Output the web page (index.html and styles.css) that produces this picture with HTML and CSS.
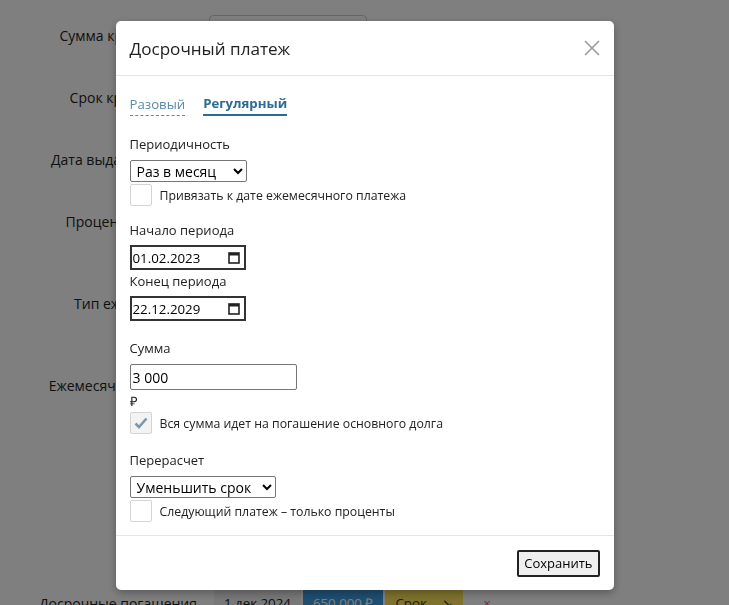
FILE: index.html
```html
<!DOCTYPE html>
<html lang="ru">

<head>
    <meta charset="UTF-8">
    <meta name="viewport" content="width=device-width, initial-scale=1.0">
    <title>Кредитный калькулятор</title>
    <link rel="stylesheet" href="styles.css">
</head>

<body>
    <div class="page">
        <div class="row">
            <span class="row-label">Сумма кредита, руб.</span>
            <input class="field" type="text" value="5 000 000">
        </div>
        <div class="row">
            <span class="row-label">Срок кредита, мес.</span>
            <input class="field" type="text" value="84">
        </div>
        <div class="row">
            <span class="row-label">Дата выдачи кредита</span>
            <input class="field" type="text" value="22.12.2022">
        </div>
        <div class="row">
            <span class="row-label">Процентная ставка</span>
            <input class="field" type="text" value="9,5">
        </div>
        <div class="row row-tall">
            <span class="row-label row-label-top">Тип ежемесячных платежей</span>
            <div class="field-note">Аннуитетный</div>
        </div>
        <div class="row">
            <span class="row-label">Ежемесячный платеж</span>
            <div class="field-note">81 718 ₽</div>
        </div>
        <div class="spacer"></div>
        <div class="row">
            <span class="row-label">Досрочные погашения</span>
            <div class="chips">
                <span class="chip chip-date">1 дек 2024</span>
                <span class="chip chip-sum">650 000 ₽</span>
                <span class="chip chip-type">Срок <span class="chip-arrow">↘</span></span>
                <span class="chip-remove">×</span>
            </div>
        </div>
    </div>

    <div class="backdrop">
        <div class="modal">
            <div class="modal-header">
                <h4 class="modal-title">Досрочный платеж</h4>
                <button class="close" type="button" aria-label="Закрыть">
                    <svg width="16" height="16" viewBox="0 0 16 16">
                        <path d="M1 1 L15 15 M15 1 L1 15" stroke="#9a9a9a" stroke-width="1.6" fill="none" />
                    </svg>
                </button>
            </div>

            <div class="modal-body">
                <div class="tabs">
                    <span class="tab">Разовый</span>
                    <span class="tab tab-active">Регулярный</span>
                </div>

                <div class="label">Периодичность</div>
                <select class="select select-period">
                    <option>Раз в месяц</option>
                    <option>Раз в квартал</option>
                    <option>Раз в год</option>
                </select>
                <label class="check">
                    <span class="check-box"></span>
                    <span>Привязать к дате ежемесячного платежа</span>
                </label>

                <div class="label label-date label-gap">Начало периода</div>
                <div class="date-field">
                    <span>01.02.2023</span>
                    <svg width="12" height="13" viewBox="0 0 12 13">
                        <rect x="1" y="2" width="10" height="10" fill="none" stroke="#222" stroke-width="1.6" />
                        <rect x="1" y="2" width="10" height="2.5" fill="#222" />
                    </svg>
                </div>
                <div class="label label-date label-tight">Конец периода</div>
                <div class="date-field">
                    <span>22.12.2029</span>
                    <svg width="12" height="13" viewBox="0 0 12 13">
                        <rect x="1" y="2" width="10" height="10" fill="none" stroke="#222" stroke-width="1.6" />
                        <rect x="1" y="2" width="10" height="2.5" fill="#222" />
                    </svg>
                </div>

                <div class="label label-wide">Сумма</div>
                <input class="input-sum" type="text" value="3 000">
                <div class="currency">₽</div>
                <label class="check">
                    <span class="check-box check-box-on">
                        <svg width="14" height="12" viewBox="0 0 14 12">
                            <path d="M1.5 6.5 L5 10 L12.5 1.5" stroke="#7d97ad" stroke-width="2.6" fill="none" />
                        </svg>
                    </span>
                    <span>Вся сумма идет на погашение основного долга</span>
                </label>

                <div class="label label-recalc">Перерасчет</div>
                <select class="select select-recalc">
                    <option>Уменьшить срок</option>
                    <option>Уменьшить платеж</option>
                </select>
                <label class="check">
                    <span class="check-box"></span>
                    <span>Следующий платеж – только проценты</span>
                </label>
            </div>

            <div class="modal-footer">
                <button class="btn-save" type="button">Сохранить</button>
            </div>
        </div>
    </div>
</body>

</html>
```

FILE: styles.css
```css
body {
    margin: 0;
    font-family: "Open Sans", Arial, sans-serif;
    font-size: 14px;
    color: #222;
    background: #fff;
    height: 605px;
    overflow: hidden;
}

/* страница под модальным окном */
.page {
    padding-top: 15px;
    display: flex;
    flex-direction: column;
    gap: 22px;
}

.row {
    display: grid;
    grid-template-columns: 160px 1fr;
    column-gap: 12px;
    align-items: center;
    height: 40px;
    padding-left: 37px;
}

.row-tall {
    height: 80px;
}

.row-label {
    text-align: right;
}

.row-label-top {
    align-self: start;
    margin-top: 31px;
}

.field {
    width: 158px;
    height: 34px;
    box-sizing: border-box;
    border: 1px solid #ccc;
    border-radius: 4px;
    font: inherit;
    padding: 0 8px;
    align-self: start;
}

.spacer {
    height: 134px;
}

.chips {
    display: flex;
    align-items: center;
    gap: 2px;
    align-self: start;
    padding-top: 7px;
    margin-left: 5px;
    font-size: 13.3px;
}

.chip {
    padding: 0 10px;
    line-height: 26px;
}

.chip-date {
    background: #f0f0f0;
}

.chip-sum {
    background: #3d9de0;
    color: #fff;
}

.chip-type {
    background: #ffe45a;
    color: #333;
}

.chip-arrow {
    margin-left: 12px;
}

.chip-remove {
    color: #ff5050;
    margin-left: 18px;
}

/* модальное окно */
.backdrop {
    position: fixed;
    inset: 0;
    background: rgba(0, 0, 0, 0.5);
    display: flex;
    justify-content: center;
    align-items: flex-start;
}

.modal {
    margin-top: 21px;
    width: 498px;
    background: #fff;
    border-radius: 5px;
    box-shadow: 0 3px 9px rgba(0, 0, 0, 0.3);
}

.modal-header {
    display: flex;
    justify-content: space-between;
    align-items: center;
    height: 54px;
    padding: 0 14px;
    border-bottom: 1px solid #e5e5e5;
}

.modal-title {
    margin: 0;
    font-size: 17.1px;
    font-weight: normal;
    color: #222;
}

.close {
    border: none;
    background: none;
    padding: 0;
    width: 16px;
    height: 16px;
    cursor: pointer;
}

.modal-body {
    padding: 17px 14px 13px;
    display: flex;
    flex-direction: column;
    align-items: flex-start;
}

.tabs {
    display: flex;
    gap: 18px;
    margin-bottom: 20px;
    font-size: 13.2px;
}

.tab {
    color: #5a8aa8;
    border-bottom: 1px dashed #5a8aa8;
    line-height: 22px;
}

.tab-active {
    font-weight: bold;
    color: #2d6c92;
    border-bottom: 2px solid #2d6c92;
    line-height: 21px;
}

.label {
    font-size: 13px;
    line-height: 17px;
    margin-bottom: 7px;
}

.label-date {
    margin-bottom: 6px;
}

.label-gap {
    margin-top: 16px;
}

.label-tight {
    margin-top: 3px;
}

.label-wide {
    margin-top: 19px;
}

.label-recalc {
    margin-top: 18px;
}

.select {
    font: inherit;
    font-size: 14px;
    height: 22px;
    padding: 0 2px;
    border: 1px solid #767676;
    border-radius: 2px;
    color: #000;
    background: #fff;
}

.select-period {
    width: 117px;
}

.select-recalc {
    width: 146px;
}

.check {
    display: flex;
    align-items: center;
    gap: 8px;
    font-size: 12.3px;
    margin-top: 2px;
}

.check-box {
    width: 20px;
    height: 20px;
    border: 1px solid #d4d4d4;
    border-radius: 2px;
    display: flex;
    align-items: center;
    justify-content: center;
}

.check-box-on {
    background: #f3f3f3;
}

.date-field {
    width: 116px;
    height: 25px;
    box-sizing: border-box;
    border: 2px solid #333;
    display: flex;
    align-items: center;
    justify-content: space-between;
    padding: 0 4px 0 1px;
    font-size: 13.3px;
    color: #000;
}

.input-sum {
    width: 167px;
    height: 26px;
    box-sizing: border-box;
    border: 1px solid #767676;
    border-radius: 2px;
    font: inherit;
    font-size: 14px;
    padding: 0 2px;
    color: #000;
}

.currency {
    font-size: 13px;
    line-height: 18px;
    margin-top: 2px;
}

.modal-footer {
    border-top: 1px solid #e5e5e5;
    height: 54px;
    display: flex;
    justify-content: flex-end;
    align-items: center;
    padding: 0 14px;
}

.btn-save {
    font: inherit;
    font-size: 13px;
    color: #000;
    background: #efefef;
    border: 2px solid #222;
    border-radius: 2px;
    height: 27px;
    padding: 0 5px;
}
```
